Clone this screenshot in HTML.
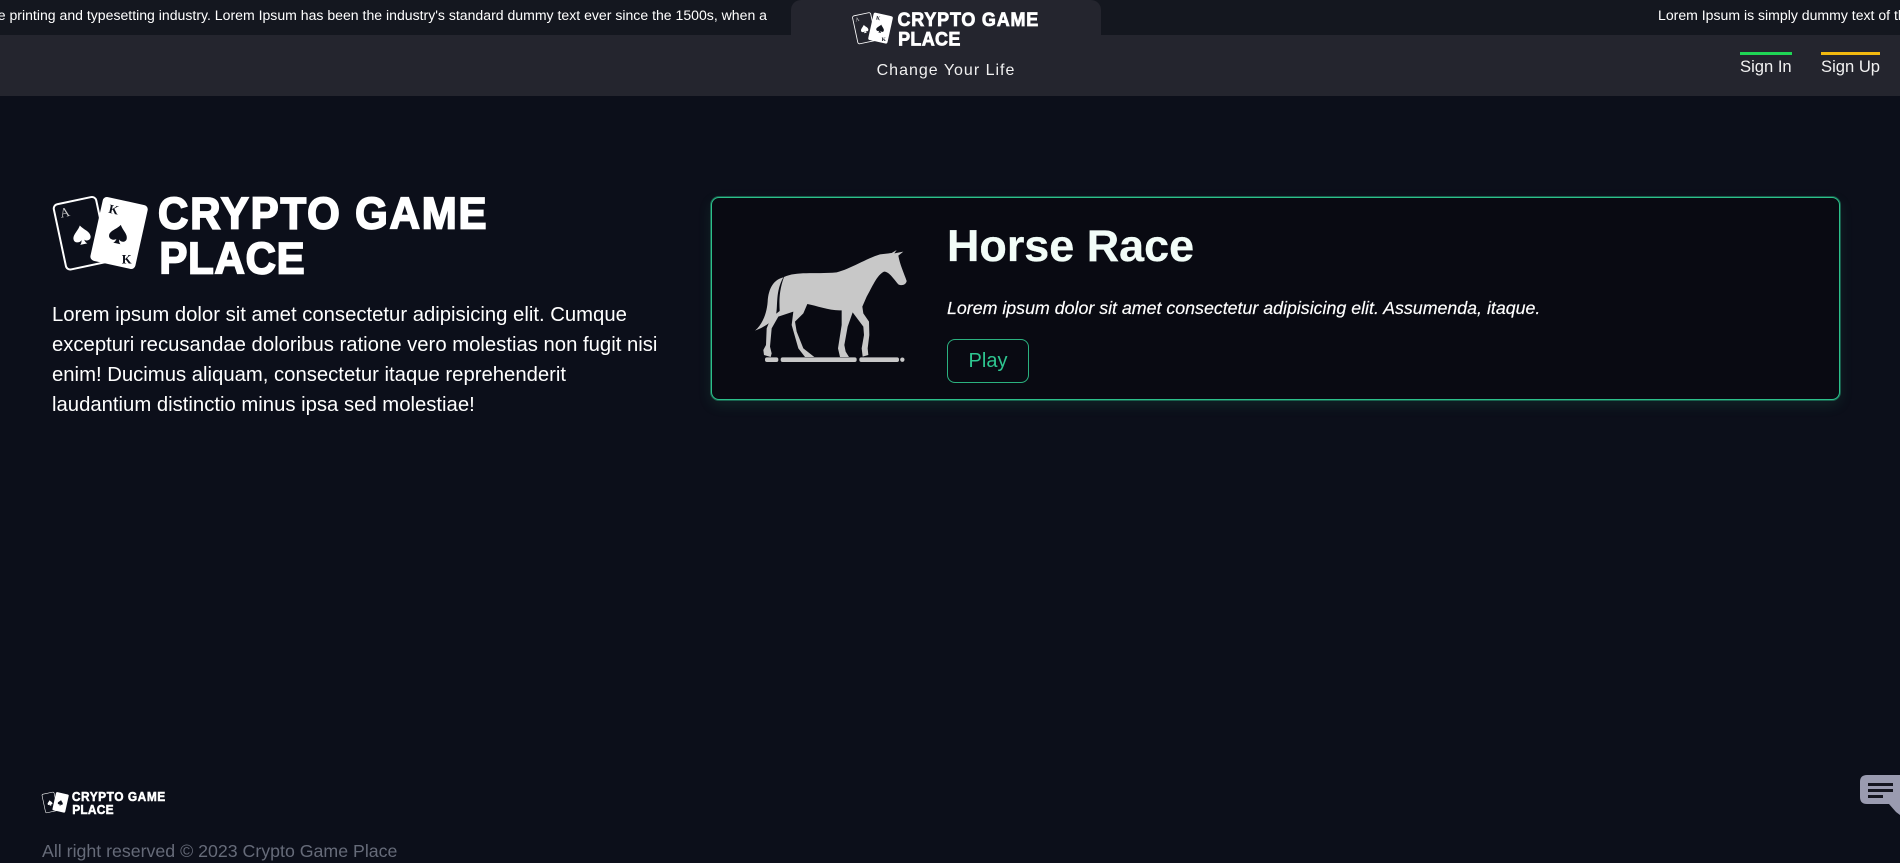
<!DOCTYPE html>
<html lang="en">
<head>
<meta charset="utf-8">
<title>Crypto Game Place</title>
<style>
*{box-sizing:border-box;margin:0;padding:0}
html,body{width:1900px;height:863px;overflow:hidden;background:#0c0f1a;color:#fff;font-family:"Liberation Sans",Arial,sans-serif}
.abs{position:absolute}
#ticker{left:0;top:0;width:1900px;height:35px;background:#14171f;overflow:hidden}
#ticker span{position:absolute;top:7px;font-size:14.07px;line-height:16px;white-space:nowrap}
#nav{left:0;top:35px;width:1900px;height:61px;background:#24252e}
#notch{left:791px;top:0;width:310px;height:96px;background:#24252e;border-radius:10px 10px 0 0}
#tag{left:791px;width:310px;top:61.5px;text-align:center;font-size:16px;line-height:18px;letter-spacing:1px;color:#f0f0f0}
.sign{top:52px;font-size:16.6px;line-height:23px;border-top:3px solid;padding-top:0;white-space:nowrap;color:#f2f2f2;height:30px}
#intro{left:52px;top:299.5px;font-size:20.3px;line-height:30px;white-space:nowrap;color:#fff}
#card{left:711px;top:197px;width:1129px;height:203px;background:#090a12;border:1px solid #2cc08a;border-radius:8px;box-shadow:0 0 0 1px rgba(44,192,138,.42),0 5px 14px rgba(43,177,127,.13)}
#title{left:947px;top:220px;font-size:44.9px;line-height:52px;font-weight:700;color:#f2fdf8;white-space:nowrap;-webkit-text-stroke:.3px #f2fdf8}
#desc{left:947px;top:297px;font-size:17.8px;line-height:22px;font-style:italic;color:#fff;white-space:nowrap;-webkit-text-stroke:.15px #fff}
#play{left:947px;top:339px;width:82px;height:44px;border:1px solid #2bb17f;border-radius:8px;color:#2ec690;font-size:20px;line-height:42px;text-align:center}
#copy{left:42px;top:840px;font-size:17.76px;line-height:22px;color:#666b79;white-space:nowrap}
svg{display:block}
</style>
</head>
<body>
<div class="abs" id="ticker">
  <span style="right:1133px">Lorem Ipsum is simply dummy text of the printing and typesetting industry. Lorem Ipsum has been the industry's standard dummy text ever since the 1500s, when a</span>
  <span style="left:1658px">Lorem Ipsum is simply dummy text of the printing</span>
</div>
<div class="abs" id="nav"></div>
<div class="abs" id="notch"></div>

<svg class="abs" style="left:851px;top:11px" width="188.4" height="35.7" viewBox="30 40 1320 250">
  <rect x="58" y="61" width="130" height="200" rx="13" transform="rotate(-12 122 161)" fill="none" stroke="#fff" stroke-width="6"/>
  <rect x="168" y="62" width="138" height="196" rx="13" transform="rotate(12.5 237 160)" fill="#fff"/>
  <path d="M125 137C134 152 150 160 150 174C150 186 136 189 129 181C130 187 132 191 136 194H114C118 191 120 187 121 181C114 189 98 186 98 174C98 160 116 152 125 137Z" fill="#fff" transform="rotate(-12 125 165)"/>
  <path d="M236 135C245 150 262 158 262 172C262 184 247 187 240 179C241 185 243 189 247 192H225C229 189 231 185 232 179C225 187 208 184 208 172C208 158 227 150 236 135Z" fill="#14171f" transform="rotate(12 236 165)"/>
  <text x="60" y="112" font-family="Liberation Serif,serif" font-size="40" fill="#ccc" transform="rotate(-12 72 100)">A</text>
  <text x="206" y="102" font-family="Liberation Serif,serif" font-size="38" font-weight="700" fill="#14171f" transform="rotate(12 220 90)">K</text>
  <text x="245" y="252" font-family="Liberation Serif,serif" font-size="38" font-weight="700" fill="#14171f">K</text>
  <text transform="translate(356 146) scale(1 1.07)" font-family="Liberation Sans,sans-serif" font-size="126" font-weight="700" fill="#fff" stroke="#fff" stroke-width="5" textLength="986" lengthAdjust="spacing">CRYPTO GAME</text>
  <text transform="translate(360 281) scale(1 1.07)" font-family="Liberation Sans,sans-serif" font-size="126" font-weight="700" fill="#fff" stroke="#fff" stroke-width="5" textLength="436" lengthAdjust="spacing">PLACE</text>
</svg>
<div class="abs" id="tag">Change Your Life</div>

<div class="abs sign" style="left:1740px;width:52px;border-color:#1fd655">Sign In</div>
<div class="abs sign" style="left:1821px;width:59px;border-color:#f2b90f">Sign Up</div>

<svg class="abs" style="left:50px;top:193px" width="440" height="83.3" viewBox="30 40 1320 250">
  <rect x="58" y="61" width="130" height="200" rx="13" transform="rotate(-12 122 161)" fill="none" stroke="#fff" stroke-width="6"/>
  <rect x="168" y="62" width="138" height="196" rx="13" transform="rotate(12.5 237 160)" fill="#fff"/>
  <path d="M125 137C134 152 150 160 150 174C150 186 136 189 129 181C130 187 132 191 136 194H114C118 191 120 187 121 181C114 189 98 186 98 174C98 160 116 152 125 137Z" fill="#fff" transform="rotate(-12 125 165)"/>
  <path d="M236 135C245 150 262 158 262 172C262 184 247 187 240 179C241 185 243 189 247 192H225C229 189 231 185 232 179C225 187 208 184 208 172C208 158 227 150 236 135Z" fill="#0c0f1a" transform="rotate(12 236 165)"/>
  <text x="60" y="112" font-family="Liberation Serif,serif" font-size="40" fill="#ccc" transform="rotate(-12 72 100)">A</text>
  <text x="206" y="102" font-family="Liberation Serif,serif" font-size="38" font-weight="700" fill="#0c0f1a" transform="rotate(12 220 90)">K</text>
  <text x="245" y="252" font-family="Liberation Serif,serif" font-size="38" font-weight="700" fill="#0c0f1a">K</text>
  <text transform="translate(354 146) scale(1 1.07)" font-family="Liberation Sans,sans-serif" font-size="126" font-weight="700" fill="#fff" stroke="#fff" stroke-width="5" textLength="986" lengthAdjust="spacing">CRYPTO GAME</text>
  <text transform="translate(358 281) scale(1 1.07)" font-family="Liberation Sans,sans-serif" font-size="126" font-weight="700" fill="#fff" stroke="#fff" stroke-width="5" textLength="436" lengthAdjust="spacing">PLACE</text>
</svg>

<div class="abs" id="intro">Lorem ipsum dolor sit amet consectetur adipisicing elit. Cumque<br>excepturi recusandae doloribus ratione vero molestias non fugit nisi<br>enim! Ducimus aliquam, consectetur itaque reprehenderit<br>laudantium distinctio minus ipsa sed molestiae!</div>

<div class="abs" id="card"></div>
<svg class="abs" style="left:700px;top:185px" width="360" height="225" viewBox="0 0 1080 675">
  <g fill="#c8c8c8">
    <path d="M252 276C290 258 340 268 410 262C450 252 500 220 540 208L575 204L590 195L583 205L610 200L595 212C600 240 612 265 620 288C618 300 605 303 595 298C580 280 565 258 552 260C530 270 515 310 500 335L487 365L490 385L507 410L508 450L503 490L505 510L488 515L485 490L492 450L490 425L458 382L443 425L433 480L437 500L447 516L420 516L414 490L425 420L425 376C390 378 350 362 322 357L310 385L285 410L290 440L310 490L343 516L315 516L295 490L275 420L280 380L235 395L215 430L210 485L215 505L212 516L192 510L190 495L198 480L200 430L213 398L239 378C238 350 236 320 252 276Z"/>
    <path d="M250 277C222 283 205 310 203 350C200 390 185 420 165 437C195 425 215 412 228 390C234 360 226 320 250 277Z"/>
    <rect x="195" y="517" width="40" height="14" rx="6"/>
    <rect x="242" y="517" width="228" height="14" rx="6"/>
    <rect x="478" y="517" width="119" height="14" rx="6"/>
    <circle cx="607" cy="524" r="6.5"/>
  </g>
</svg>
<div class="abs" id="title">Horse Race</div>
<div class="abs" id="desc">Lorem ipsum dolor sit amet consectetur adipisicing elit. Assumenda, itaque.</div>
<div class="abs" id="play">Play</div>

<svg class="abs" style="left:41px;top:791px" width="125" height="23.7" viewBox="30 40 1320 250">
  <rect x="58" y="61" width="130" height="200" rx="13" transform="rotate(-12 122 161)" fill="none" stroke="#fff" stroke-width="6"/>
  <rect x="168" y="62" width="138" height="196" rx="13" transform="rotate(12.5 237 160)" fill="#fff"/>
  <path d="M125 137C134 152 150 160 150 174C150 186 136 189 129 181C130 187 132 191 136 194H114C118 191 120 187 121 181C114 189 98 186 98 174C98 160 116 152 125 137Z" fill="#fff" transform="rotate(-12 125 165)"/>
  <path d="M236 135C245 150 262 158 262 172C262 184 247 187 240 179C241 185 243 189 247 192H225C229 189 231 185 232 179C225 187 208 184 208 172C208 158 227 150 236 135Z" fill="#0c0f1a" transform="rotate(12 236 165)"/>
  <text transform="translate(356 146) scale(1 1.07)" font-family="Liberation Sans,sans-serif" font-size="126" font-weight="700" fill="#fff" stroke="#fff" stroke-width="5" textLength="986" lengthAdjust="spacing">CRYPTO GAME</text>
  <text transform="translate(360 281) scale(1 1.07)" font-family="Liberation Sans,sans-serif" font-size="126" font-weight="700" fill="#fff" stroke="#fff" stroke-width="5" textLength="436" lengthAdjust="spacing">PLACE</text>
</svg>
<div class="abs" id="copy">All right reserved © 2023 Crypto Game Place</div>

<svg class="abs" style="left:1860px;top:775px" width="40" height="40" viewBox="0 0 40 40">
  <path d="M7 0H40V40L36 37L29 29H7Q0 29 0 22V7Q0 0 7 0Z" fill="#9a9bb0"/>
  <rect x="8" y="8" width="25" height="3" fill="#14151f"/>
  <rect x="8" y="14" width="25" height="3" fill="#14151f"/>
  <rect x="8" y="20" width="15" height="3" fill="#14151f"/>
</svg>
</body>
</html>
